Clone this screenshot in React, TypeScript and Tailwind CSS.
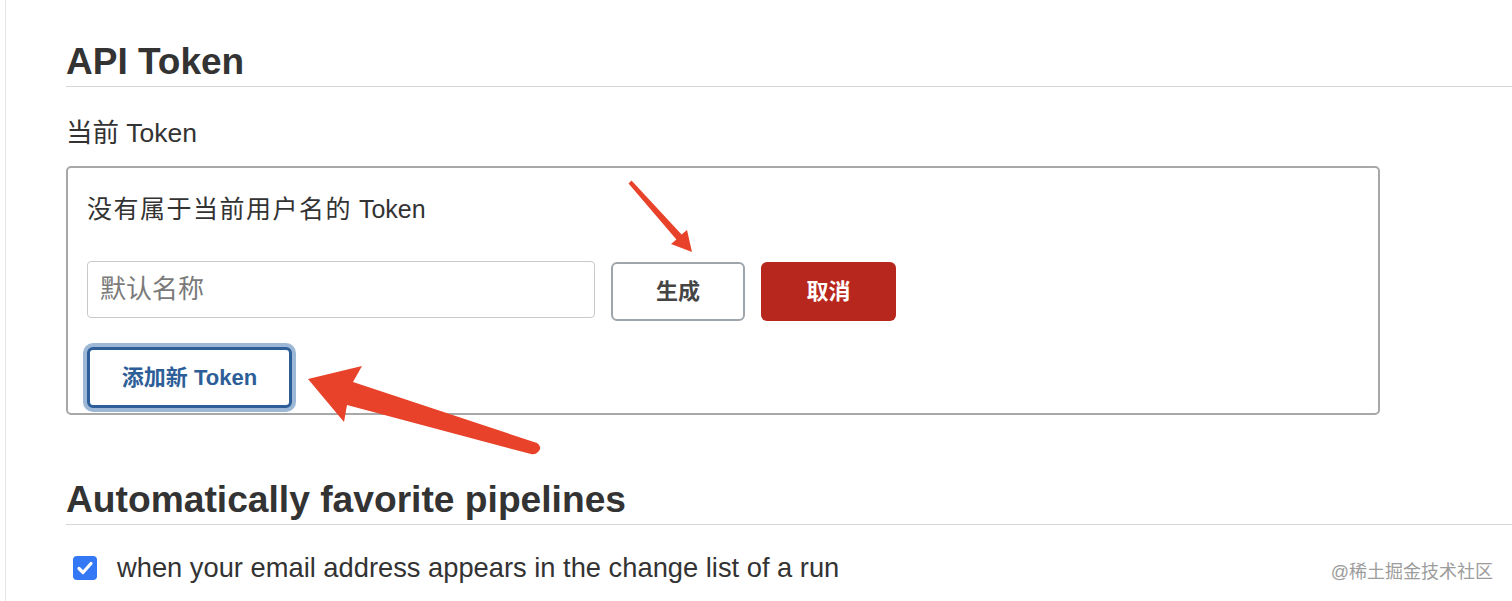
import React from "react";

const font = {
  fontFamily: '"Liberation Sans", "Noto Sans CJK SC", Arial, sans-serif',
};

function Arrows() {
  return (
    <svg
      className="pointer-events-none absolute left-0 top-0"
      width="1512"
      height="601"
      viewBox="0 0 1512 601"
    >
      {/* arrow pointing at 生成 */}
      <polygon
        fill="#e8432a"
        points="628.5,183.5 631.5,180.5 681.6,234.6 687,230 692,252 671,244 676.4,239.4"
      />
      {/* arrow pointing at 添加新 Token */}
      <path
        fill="#e8432a"
        d="M308 379 L362 366 L353 382 L537 443 Q543 447 538 452 Q535 455 531 454 L347 405 L344 422 Z"
      />
    </svg>
  );
}

export default function App() {
  return (
    <div
      className="relative h-[601px] w-[1512px] overflow-hidden bg-white pl-[5px] text-[#333]"
      style={font}
    >
      <div className="h-full border-l border-[#e4e4e4] pl-[60px] pt-[40px]">
        <h2 className="border-b border-[#d6d6d6] pb-[3px] text-[37px] font-bold leading-[43px]">
          API Token
        </h2>

        <div className="mt-[31px] text-[26.5px] leading-[30px]">当前 Token</div>

        <div className="mt-[18px] w-[1314px] rounded-[5px] border-2 border-[#a8a8a8] pb-[5px] pl-[19px] pt-[26px]">
          <p className="text-[25px] leading-[30px]">
            <span className="tracking-[1.5px]">没有属于当前用户名的</span> Token
          </p>

          <div className="mt-[37px] flex items-start gap-4">
            <input
              className="h-[57px] w-[508px] rounded-[4px] border-[1.5px] border-[#c9c9c9] px-[12px] text-[26px] text-[#333] outline-none placeholder:text-[#7a7a7a]"
              placeholder="默认名称"
              style={font}
            />
            <button className="mt-px flex h-[59px] w-[134px] items-center justify-center rounded-[6px] border-[2.5px] border-[#9ea5ab] bg-white text-[22px] font-bold text-[#454545]">
              生成
            </button>
            <button className="mt-px flex h-[59px] w-[135px] items-center justify-center rounded-[6px] bg-[#b8271e] text-[22px] font-bold text-white">
              取消
            </button>
          </div>

          <button className="mt-[26px] flex h-[61px] w-[205px] items-center justify-center rounded-[6px] border-[3px] border-[#2d5e98] bg-white text-[22px] font-bold text-[#2d5e98] shadow-[0_0_0_4px_#9cb8d6]">
            添加新 Token
          </button>
        </div>

        <h2 className="mt-[62px] border-b border-[#d6d6d6] pb-[3px] text-[37.2px] font-bold leading-[44px]">
          Automatically favorite pipelines
        </h2>

        <label className="mt-[25px] flex h-[36px] items-center gap-[20px] pl-[7px]">
          <span className="flex h-[24px] w-[24px] items-center justify-center rounded-[4px] bg-[#3478f6]">
            <svg width="20" height="20" viewBox="0 0 20 20" fill="none">
              <path
                d="M4 10.5l4 4L16 5.5"
                stroke="white"
                strokeWidth="3.2"
                strokeLinecap="round"
                strokeLinejoin="round"
              />
            </svg>
          </span>
          <span className="text-[27.3px] leading-[32px]">
            when your email address appears in the change list of a run
          </span>
        </label>
      </div>

      <Arrows />

      <div className="absolute right-[19px] top-[561px] text-[18px] leading-[22px] text-[#9c9c9c]">
        @稀土掘金技术社区
      </div>
    </div>
  );
}
